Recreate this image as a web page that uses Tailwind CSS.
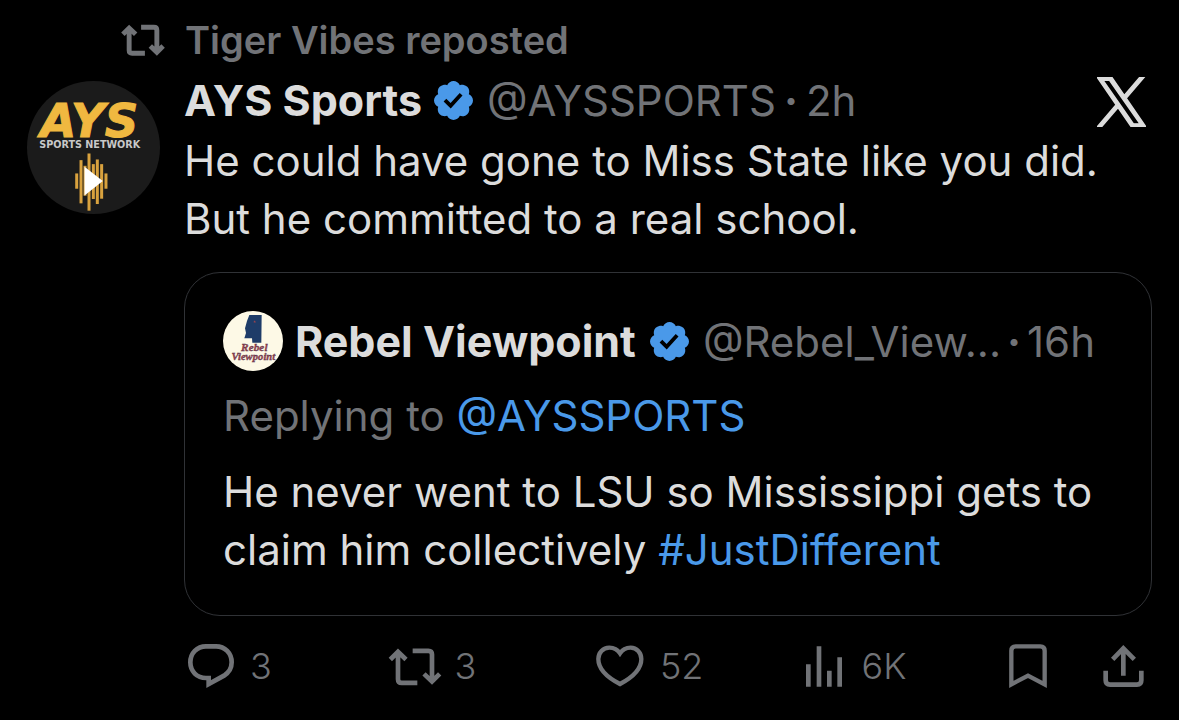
<!DOCTYPE html>
<html lang="en">
<head>
    <meta charset="UTF-8">
    <meta name="viewport" content="width=device-width, initial-scale=1.0">
    <title>AYS Sports on X</title>
    <script src="https://cdn.jsdelivr.net/npm/@tailwindcss/browser@4"></script>
</head>
<body class="bg-black font-['Inter','Liberation_Sans',sans-serif] text-[#dcdcdc]">
    <!-- Shared icons -->
    <svg class="hidden" aria-hidden="true">
        <symbol id="icon-repost" viewBox="0 0 162 116">
            <g fill="none" stroke="currentColor">
                <path d="M7 37 30 14 54 37M30 14V96Q30 107 41 107H88"/>
                <path d="M74 11H121Q132 11 132 22V103M108 80 132 103 155 80"/>
            </g>
        </symbol>
        <symbol id="icon-verified" viewBox="1.6 1.6 18.8 18.8">
            <path fill="currentColor" d="M20.396 11c-.018-.646-.215-1.275-.57-1.816-.354-.54-.852-.972-1.438-1.246.223-.607.27-1.264.14-1.897-.131-.634-.437-1.218-.882-1.687-.47-.445-1.053-.75-1.687-.882-.633-.13-1.29-.083-1.897.14-.273-.587-.704-1.086-1.245-1.44S11.647 1.62 11 1.604c-.646.017-1.273.213-1.813.568s-.969.854-1.24 1.44c-.608-.223-1.267-.272-1.902-.14-.635.13-1.22.436-1.69.882-.445.47-.749 1.055-.878 1.688-.13.633-.08 1.29.144 1.896-.587.274-1.087.705-1.443 1.245-.356.54-.555 1.17-.574 1.817.02.647.218 1.276.574 1.817.356.54.856.972 1.443 1.245-.224.606-.274 1.263-.144 1.896.13.634.433 1.218.877 1.688.47.443 1.054.747 1.687.878.633.132 1.29.084 1.897-.136.274.586.705 1.084 1.246 1.439.54.354 1.17.551 1.816.569.647-.016 1.276-.213 1.817-.567s.972-.854 1.245-1.44c.604.239 1.266.296 1.903.164.636-.132 1.22-.447 1.68-.907.46-.46.776-1.044.908-1.681s.075-1.299-.165-1.903c.586-.274 1.084-.705 1.439-1.246.354-.54.551-1.17.569-1.816zM9.662 14.85l-3.429-3.428 1.293-1.302 2.072 2.072 4.4-4.794 1.347 1.246z"/>
        </symbol>
    </svg>

    <article class="px-[27px] pt-3">
        <!-- Reposted by -->
        <div class="flex items-center gap-5 h-14 text-[#717377]">
            <div class="w-[138px] flex justify-end">
                <svg class="w-11 h-8 stroke-[18px]"><use href="#icon-repost"/></svg>
            </div>
            <a href="#" class="text-[38px] font-semibold">Tiger Vibes reposted</a>
        </div>

        <div class="flex gap-6">
            <a href="#" class="shrink-0 mt-[13px]" aria-label="AYS Sports">
                <svg class="w-[133px] h-[133px]" viewBox="0 0 400 400">
                    <circle cx="200" cy="200" r="200" fill="#1b1b1b"/>
                    <text x="40" y="169" font-family="DejaVu Sans" font-weight="bold" font-style="italic" font-size="140" fill="#f0b840" stroke="#f0b840" stroke-width="3">AYS</text>
                    <text x="37" y="201" font-family="DejaVu Sans" font-weight="bold" font-size="29" fill="#c8c8c8">SPORTS NETWORK</text>
                    <g fill="#d9a23e">
                        <rect x="145" y="278" width="9" height="46"/>
                        <rect x="158" y="238" width="9" height="130"/>
                        <rect x="170" y="255" width="9" height="90"/>
                        <rect x="182" y="218" width="9" height="172"/>
                        <rect x="195" y="250" width="9" height="105"/>
                        <rect x="207" y="236" width="9" height="134"/>
                        <rect x="220" y="250" width="9" height="104"/>
                        <rect x="233" y="278" width="9" height="46"/>
                    </g>
                    <path d="M173 258 228 301 173 344Z" fill="#fff"/>
                </svg>
            </a>

            <div class="flex-1 min-w-0">
                <!-- Author -->
                <div class="flex items-center justify-between pr-1.5 h-16">
                    <div class="flex items-center text-[42px]">
                        <a href="#" class="text-[43px] font-bold">AYS Sports</a>
                        <svg class="w-[39px] h-[39px] ml-3 mr-3.5 text-[#4a99e9]" role="img" aria-label="Verified"><use href="#icon-verified"/></svg>
                        <a href="#" class="text-[#717377]">@AYSSPORTS</a>
                        <span class="text-[#717377] font-bold mx-2">·</span>
                        <a href="#" class="text-[#717377]">2h</a>
                    </div>
                    <a href="#" class="mt-1" aria-label="X">
                        <svg class="w-[49px] h-[50px]" viewBox="0 0 1200 1227" fill="currentColor" stroke="currentColor" stroke-width="36">
                            <path d="M714.163 519.284L1160.89 0H1055.03L667.137 450.887L357.328 0H0L468.492 681.821L0 1226.37H105.866L515.491 750.218L842.672 1226.37H1200L714.137 519.284H714.163ZM569.165 687.828L521.697 619.934L144.011 79.6944H306.615L611.412 515.685L658.88 583.579L1055.08 1150.3H892.476L569.165 687.854V687.828Z"/>
                        </svg>
                    </a>
                </div>

                <p class="text-[42px] leading-[58px]">He could have gone to Miss State like you did. <br>But he committed to a real school.</p>

                <!-- Quoted post -->
                <section class="mt-6 border border-[#303236] rounded-[36px] px-[38px] pt-[38px] pb-9">
                    <div class="flex items-center h-[60px] text-[42px] whitespace-nowrap">
                        <svg class="w-[60px] h-[60px] shrink-0" viewBox="0 0 180 180">
                            <circle cx="90" cy="90" r="90" fill="#fdf9e6"/>
                            <path d="M79 12H116L115 95H88L87 82H64L69 66 66 52 72 30Z" fill="#1e3c68"/>
                            <path d="M95 28 98 36 91 31H99L92 36Z" fill="#a5444c"/>
                            <g font-family="Liberation Serif" font-weight="bold" font-style="italic" text-anchor="middle" fill="#a5444c" stroke="#4c304a" stroke-width="1">
                                <text x="94" y="119" font-size="34">Rebel</text>
                                <text x="91" y="146" font-size="32">Viewpoint</text>
                            </g>
                        </svg>
                        <a href="#" class="text-[43px] font-bold ml-3">Rebel Viewpoint</a>
                        <svg class="w-[39px] h-[39px] shrink-0 mx-3.5 text-[#4a99e9]" role="img" aria-label="Verified"><use href="#icon-verified"/></svg>
                        <a href="#" class="text-[#717377]">@Rebel_View...</a>
                        <span class="text-[#717377] font-bold mx-1.5">·</span>
                        <a href="#" class="text-[#717377]">16h</a>
                    </div>
                    <p class="mt-4 text-[42px] leading-[58px] text-[#717377]">Replying to <a href="#" class="text-[#4a99e9]">@AYSSPORTS</a></p>
                    <p class="mt-[18px] text-[42px] leading-[58px]">He never went to LSU so Mississippi gets to <br>claim him collectively <a href="#" class="text-[#4a99e9]">#JustDifferent</a></p>
                </section>

                <!-- Actions -->
                <div class="flex items-center mt-[22px] h-14 pl-1 pr-2 text-[36px] font-light text-[#717377]">
                    <div class="flex-1 grid grid-cols-[200fr_207fr_209fr_203fr]">
                        <button class="flex items-center gap-4" aria-label="3 replies">
                            <svg class="w-[46px] h-11" viewBox="54 70 138 132" fill="none" stroke="currentColor" stroke-width="14">
                                <path d="M108 77H138C165 77 185 98 185 125C185 145 175 157 162 165L116 190V172H108C81 172 61 152 61 125C61 98 81 77 108 77Z"/>
                            </svg>
                            3
                        </button>
                        <button class="flex items-center gap-3" aria-label="3 reposts">
                            <svg class="w-[54px] h-[39px] stroke-[14px]"><use href="#icon-repost"/></svg>
                            3
                        </button>
                        <button class="flex items-center gap-4" aria-label="52 likes">
                            <svg class="w-12 h-[42px]" viewBox="45 76 144 126" fill="none" stroke="currentColor" stroke-width="13">
                                <path d="M117 101C108 87 96 84 85 84C66 84 52 99 52 118C52 148 80 174 117 193C153 174 181 148 181 118C181 99 167 84 149 84C138 84 126 87 117 101Z"/>
                            </svg>
                            52
                        </button>
                        <button class="flex items-center gap-5" aria-label="6K views">
                            <svg class="w-9 h-[41px]" viewBox="675 77 108 122" fill="currentColor">
                                <path d="M675 131h14v68h-14zM707 77h14v122h-14zM738 151h14v48h-14zM769 110h14v89h-14z"/>
                            </svg>
                            6K
                        </button>
                    </div>
                    <div class="flex items-center gap-14">
                        <button aria-label="Bookmark">
                            <svg class="w-[38px] h-11" viewBox="84 130 114 132" fill="none" stroke="currentColor" stroke-width="13">
                                <path d="M91 251V150Q91 137 104 137H178Q191 137 191 150V251L141 225Z"/>
                            </svg>
                        </button>
                        <button aria-label="Share">
                            <svg class="w-[41px] h-[42px]" viewBox="368 133 123 126" fill="none" stroke="currentColor" stroke-width="14">
                                <path d="M376 210V239Q376 252 389 252H470Q483 252 483 239V210M429 225V143M397 176 429 143 462 176"/>
                            </svg>
                        </button>
                    </div>
                </div>
            </div>
        </div>
    </article>
</body>
</html>
